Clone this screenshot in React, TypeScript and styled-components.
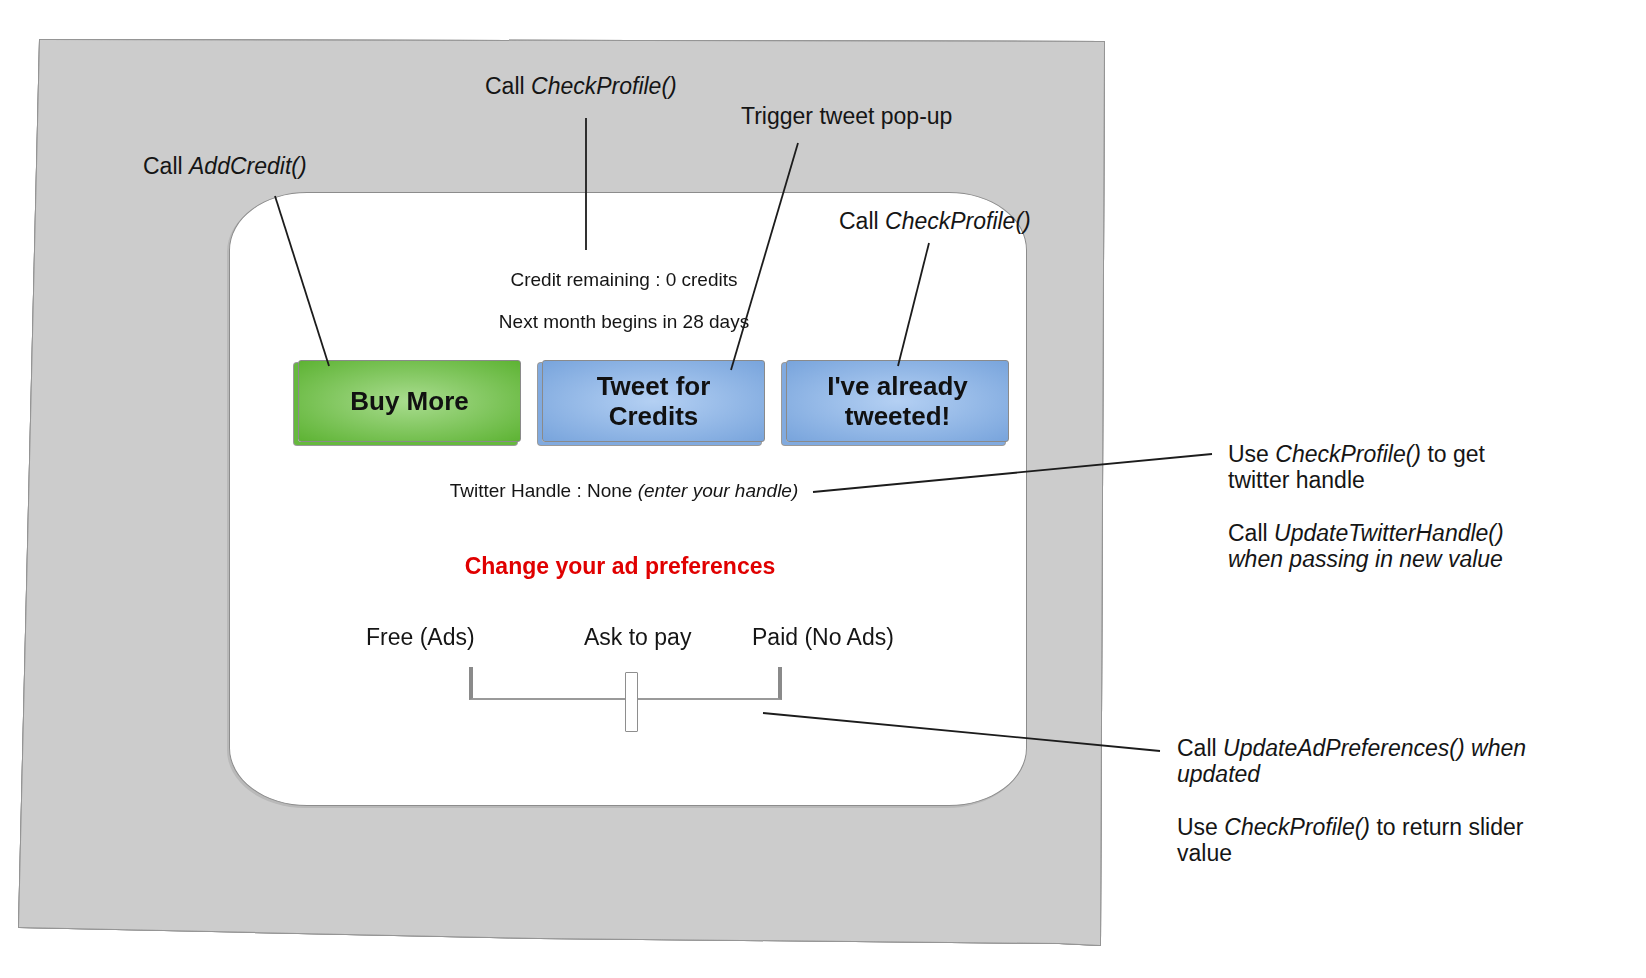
import styled, { createGlobalStyle } from 'styled-components';

const GlobalStyle = createGlobalStyle`
  html, body {
    margin: 0;
    padding: 0;
    background: #fff;
  }
  body {
    font-family: "Liberation Sans", Arial, Helvetica, sans-serif;
    color: #151515;
  }
`;

const Page = styled.div`
  position: relative;
  width: 1646px;
  height: 978px;
  overflow: hidden;
  display: flex;
  align-items: flex-start;
  background: #fff;
`;

const SheetFrame = styled.div`
  flex: none;
  margin: 40px 0 0 19px;
  filter: drop-shadow(1px 0 0 #959595) drop-shadow(-1px 0 0 #959595)
    drop-shadow(0 1px 0 #959595) drop-shadow(0 -1px 0 #959595);
`;

const Sheet = styled.div`
  width: 1085px;
  height: 905px;
  box-sizing: border-box;
  padding: 152px 0 0 210px;
  background: #cccccc;
  clip-path: polygon(21px 0, 1085px 2px, 1081px 905px, 1040px 903px, 520px 898px, 0 887px);
`;

const Panel = styled.div`
  width: 798px;
  height: 614px;
  box-sizing: border-box;
  padding: 76px 8px 0 0;
  display: flex;
  flex-direction: column;
  align-items: center;
  background: #fff;
  border: 1px solid #8c8c8c;
  border-radius: 78px / 58px;
  box-shadow: -2px 2px 0 0 #b9b9b9;
`;

const InfoLine = styled.div<{ $gap?: number }>`
  margin-top: ${(p) => p.$gap ?? 0}px;
  font-size: 19px;
  line-height: 22px;
  white-space: nowrap;
  em {
    font-style: italic;
  }
`;

const ButtonRow = styled.div`
  align-self: flex-start;
  margin: 27px 0 0 68px;
  display: flex;
  gap: 21px;
`;

const tones = {
  green: { light: '#a9dc8f', dark: '#5db333', back: '#66b93e' },
  blue: { light: '#b4d0f3', dark: '#78a4dc', back: '#81aadf' },
};

const SketchButton = styled.button<{ $tone: 'green' | 'blue' }>`
  width: 223px;
  height: 82px;
  padding: 0 30px;
  display: flex;
  align-items: center;
  justify-content: center;
  font-family: inherit;
  font-size: 26px;
  font-weight: 700;
  line-height: 30px;
  color: #111;
  text-align: center;
  border: 1px solid #8a8a8a;
  border-radius: 3px;
  background: radial-gradient(ellipse at center, ${(p) => tones[p.$tone].light} 0%, ${(p) => tones[p.$tone].dark} 100%);
  box-shadow: -4px 3px 0 0 ${(p) => tones[p.$tone].back}, -4px 3px 0 1px #9a9a9a;
  cursor: pointer;
`;

const Heading = styled.div`
  margin: 51px 8px 0 0;
  font-size: 23px;
  line-height: 26px;
  font-weight: 700;
  color: #e00000;
`;

const Labels = styled.div`
  align-self: flex-start;
  margin: 45px 0 0 136px;
  display: grid;
  grid-template-columns: 218px 168px auto;
  font-size: 23px;
  line-height: 26px;
  white-space: nowrap;
`;

const Track = styled.div`
  position: relative;
  align-self: flex-start;
  margin: 17px 0 0 239px;
  width: 313px;
  height: 33px;
  box-sizing: border-box;
  border-left: 4px solid #8a8a8a;
  border-right: 4px solid #8a8a8a;
  border-bottom: 2px solid #9a9a9a;
`;

const Thumb = styled.div`
  position: absolute;
  left: 152px;
  top: 5px;
  width: 13px;
  height: 60px;
  box-sizing: border-box;
  background: #fff;
  border: 1.5px solid #8e8e8e;
  border-radius: 1px;
`;

const Notes = styled.div`
  flex: none;
  padding-top: 441px;
  display: flex;
  flex-direction: column;
`;

const Note = styled.div<{ $indent: number; $gap: number }>`
  margin: ${(p) => p.$gap}px 0 0 ${(p) => p.$indent}px;
  font-size: 23px;
  line-height: 26px;
  white-space: nowrap;
`;

const Callout = styled.div<{ $x: number; $y: number }>`
  position: absolute;
  left: ${(p) => p.$x}px;
  top: ${(p) => p.$y}px;
  font-size: 23px;
  line-height: 26px;
  white-space: nowrap;
`;

const Connectors = styled.svg`
  position: absolute;
  left: 0;
  top: 0;
  pointer-events: none;
`;

const lines: [number, number, number, number][] = [
  [586, 118, 586, 250],
  [798, 143, 731, 370],
  [275, 196, 329, 366],
  [929, 243, 898, 366],
  [813, 492, 1212, 454],
  [763, 713, 1160, 751],
];

export default function App() {
  return (
    <>
      <GlobalStyle />
      <Page>
        <SheetFrame>
          <Sheet>
            <Panel>
              <InfoLine>Credit remaining : 0 credits</InfoLine>
              <InfoLine $gap={20}>Next month begins in 28 days</InfoLine>
              <ButtonRow>
                <SketchButton $tone="green">Buy More</SketchButton>
                <SketchButton $tone="blue">Tweet for Credits</SketchButton>
                <SketchButton $tone="blue">I've already tweeted!</SketchButton>
              </ButtonRow>
              <InfoLine $gap={38}>
                Twitter Handle : None <em>(enter your handle)</em>
              </InfoLine>
              <Heading>Change your ad preferences</Heading>
              <Labels>
                <span>Free (Ads)</span>
                <span>Ask to pay</span>
                <span>Paid (No Ads)</span>
              </Labels>
              <Track>
                <Thumb />
              </Track>
            </Panel>
          </Sheet>
        </SheetFrame>

        <Notes>
          <Note $indent={124} $gap={0}>
            Use <em>CheckProfile()</em> to get
            <br />
            twitter handle
          </Note>
          <Note $indent={124} $gap={27}>
            Call <em>UpdateTwitterHandle()</em>
            <br />
            <em>when passing in new value</em>
          </Note>
          <Note $indent={73} $gap={163}>
            Call <em>UpdateAdPreferences() when</em>
            <br />
            <em>updated</em>
          </Note>
          <Note $indent={73} $gap={27}>
            Use <em>CheckProfile()</em> to return slider
            <br />
            value
          </Note>
        </Notes>

        <Callout $x={485} $y={73}>
          Call <em>CheckProfile()</em>
        </Callout>
        <Callout $x={741} $y={103}>Trigger tweet pop-up</Callout>
        <Callout $x={143} $y={153}>
          Call <em>AddCredit()</em>
        </Callout>
        <Callout $x={839} $y={208}>
          Call <em>CheckProfile()</em>
        </Callout>

        <Connectors width={1646} height={978} viewBox="0 0 1646 978">
          {lines.map(([x1, y1, x2, y2], i) => (
            <line key={i} x1={x1} y1={y1} x2={x2} y2={y2} stroke="#1c1c1c" strokeWidth={1.8} />
          ))}
        </Connectors>
      </Page>
    </>
  );
}
